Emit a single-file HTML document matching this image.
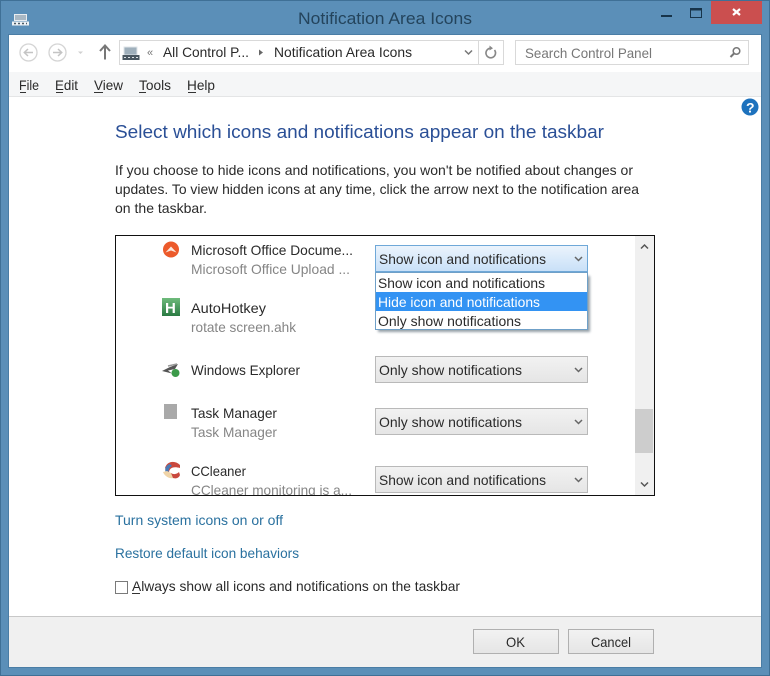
<!DOCTYPE html>
<html><head><meta charset="utf-8"><title>Notification Area Icons</title>
<style>
html,body{margin:0;padding:0;width:770px;height:676px;overflow:hidden;background:#5b8fb8}
svg{display:block}
text{font-family:"Liberation Sans",sans-serif;font-size:14px;fill:#2a2a2a;white-space:pre}
</style></head><body>
<svg width="770" height="676" viewBox="0 0 770 676" xmlns="http://www.w3.org/2000/svg">
<defs>
<linearGradient id="g" x1="0" y1="0" x2="0" y2="1"><stop offset="0" stop-color="#f2f2f2"/><stop offset="1" stop-color="#e5e5e5"/></linearGradient>
<linearGradient id="b" x1="0" y1="0" x2="0" y2="1"><stop offset="0" stop-color="#ecf4fc"/><stop offset="1" stop-color="#c8e0f8"/></linearGradient>
<linearGradient id="h" x1="0" y1="0" x2="0" y2="1"><stop offset="0" stop-color="#6fbb7c"/><stop offset="1" stop-color="#2a7a42"/></linearGradient>
<filter id="s" x="-10%" y="-20%" width="120%" height="140%"><feGaussianBlur stdDeviation="1.2"/></filter>
</defs>
<!-- frame -->
<rect width="770" height="676" fill="#5b8fb8"/>
<rect x="0.5" y="0.5" width="769" height="675" fill="none" stroke="#3f7096"/>
<rect x="9" y="35" width="752" height="632" fill="#fff"/>
<rect x="8.5" y="34.5" width="753" height="633" fill="none" stroke="#4a7da5"/>
<!-- title -->
<text x="298" y="24" style="font-size:17px;fill:#24445c" textLength="174" lengthAdjust="spacingAndGlyphs">Notification Area Icons</text>
<g>
<rect x="14" y="14" width="13" height="7" fill="#e8edf1"/><rect x="15" y="15" width="11" height="5" fill="#a9b8c4"/>
<rect x="12" y="21.5" width="17" height="4" fill="#eef2f5"/><path d="M14 23.500h2M18 23.500h2M22 23.500h2M26 23.500h1" stroke="#4a5a66" stroke-width="1.400"/>
</g>
<!-- caption buttons -->
<rect x="661" y="15" width="11" height="2" fill="#17344a"/>
<rect x="690.500" y="8.500" width="11" height="9" fill="#5b8fb8" stroke="#17344a"/><rect x="690" y="8" width="12" height="2.500" fill="#17344a"/>
<rect x="711" y="1" width="51" height="23" fill="#cb4f4f"/>
<path d="M733 9l7 6M740 9l-7 6" stroke="#fff" stroke-width="2.200"/>
<!-- nav -->
<circle cx="28.500" cy="52.500" r="8.500" fill="#fff" stroke="#d4d4d4" stroke-width="1.300"/>
<path d="M33 52.500h-8.500M28 49l-3.700 3.500 3.700 3.500" fill="none" stroke="#c4c4c4" stroke-width="1.500"/>
<circle cx="57.500" cy="52.500" r="8.500" fill="#fff" stroke="#d4d4d4" stroke-width="1.300"/>
<path d="M53 52.500h8.500M58 49l3.700 3.500-3.700 3.500" fill="none" stroke="#c4c4c4" stroke-width="1.500"/>
<path d="M78 51.500h5l-2.500 2.500z" fill="#d0d0d0"/>
<path d="M105 59.500v-13M100 51l5-5.500 5 5.500" fill="none" stroke="#777" stroke-width="2"/>
<!-- address -->
<rect x="119.500" y="40.500" width="384" height="24" fill="#fff" stroke="#d9d9d9"/>
<line x1="478.500" y1="41" x2="478.500" y2="64" stroke="#d9d9d9"/>
<rect x="124" y="47" width="13" height="8" fill="#9fb0bc" stroke="#dfe5e9"/>
<rect x="122.500" y="55" width="17" height="5" fill="#4a5862"/><path d="M124 57.500h2M128 57.500h2M132 57.500h2M136 57.500h2" stroke="#dfe5e9" stroke-width="1"/>
<text x="147" y="56" style="font-size:11px;fill:#777">«</text>
<text x="163" y="57" textLength="86" lengthAdjust="spacingAndGlyphs">All Control P...</text>
<path d="M259 49.500l4 3-4 3z" fill="#666"/>
<text x="274" y="57" textLength="138" lengthAdjust="spacingAndGlyphs">Notification Area Icons</text>
<path d="M465 50.500l3.500 3.500 3.500-3.500" fill="none" stroke="#777" stroke-width="1.500"/>
<path d="M494.500 50a4.800 4.800 0 1 1-3.500-1.800" fill="none" stroke="#888" stroke-width="1.600"/><path d="M489.500 45.500l3.500 2.700-3.500 2.300z" fill="#888"/>
<!-- search -->
<rect x="515.500" y="40.500" width="233" height="24" fill="#fff" stroke="#d9d9d9"/>
<text x="525" y="58" style="fill:#777" textLength="127" lengthAdjust="spacingAndGlyphs">Search Control Panel</text>
<circle cx="736.500" cy="51" r="3.300" fill="none" stroke="#777" stroke-width="1.500"/><path d="M734 53.500l-3.500 3.500" stroke="#777" stroke-width="2"/>
<!-- menu -->
<rect x="9" y="72" width="752" height="24" fill="#f5f6f7"/>
<line x1="9" y1="96.500" x2="761" y2="96.500" stroke="#e4e5e6"/>
<text x="19" y="90" textLength="20" lengthAdjust="spacingAndGlyphs">File</text><rect x="20" y="92" width="6" height="1" fill="#333"/>
<text x="55" y="90" textLength="23" lengthAdjust="spacingAndGlyphs">Edit</text><rect x="56" y="92" width="7" height="1" fill="#333"/>
<text x="94" y="90" textLength="29" lengthAdjust="spacingAndGlyphs">View</text><rect x="94" y="92" width="9" height="1" fill="#333"/>
<text x="139" y="90" textLength="32" lengthAdjust="spacingAndGlyphs">Tools</text><rect x="139" y="92" width="7" height="1" fill="#333"/>
<text x="187" y="90" textLength="28" lengthAdjust="spacingAndGlyphs">Help</text><rect x="188" y="92" width="8" height="1" fill="#333"/>
<!-- help -->
<circle cx="750" cy="107" r="8.500" fill="#1d72bd"/>
<text x="746" y="112.500" style="font-size:14px;font-weight:bold;fill:#fff">?</text>
<!-- heading -->
<text x="115" y="138" style="font-size:18px;fill:#2a4f96" textLength="489" lengthAdjust="spacingAndGlyphs">Select which icons and notifications appear on the taskbar</text>
<text x="115" y="175" textLength="518" lengthAdjust="spacingAndGlyphs">If you choose to hide icons and notifications, you won't be notified about changes or</text>
<text x="115" y="194" textLength="524" lengthAdjust="spacingAndGlyphs">updates. To view hidden icons at any time, click the arrow next to the notification area</text>
<text x="115" y="213" textLength="92" lengthAdjust="spacingAndGlyphs">on the taskbar.</text>
<!-- list -->
<rect x="115.500" y="235.500" width="539" height="260" fill="#fff" stroke="#111"/>
<rect x="635" y="236" width="19" height="259" fill="#f0f0f0"/>
<rect x="635" y="409" width="18" height="44" fill="#cdcdcd"/>
<path d="M641 248.500l3.500-3.500 3.500 3.500" fill="none" stroke="#555" stroke-width="1.500"/>
<path d="M641 482.500l3.500 3.500 3.500-3.500" fill="none" stroke="#555" stroke-width="1.500"/>
<!-- icons -->
<circle cx="171" cy="249.500" r="8" fill="#ec5a2b"/><path d="M165.500 252.500l5.500-6 5.500 6-5.500-2z" fill="#fde8dc"/>
<rect x="162" y="298" width="18" height="18" fill="url(#h)"/>
<text x="165" y="313" style="font-size:15px;font-weight:bold;fill:#fff">H</text>
<path d="M162 371l8-4 8-3-3 5-7 1.500 4 3z" fill="#555"/><path d="M168 366l9-2" stroke="#999" stroke-width="1.500"/>
<circle cx="175.500" cy="373" r="4" fill="#3c9a4a"/>
<rect x="164" y="404" width="13" height="15" fill="#a9a9a9"/>
<path d="M180 465c-5-5-13-4-15 3l4 5c0-5 4-7 11-5z" fill="#c9483d"/>
<path d="M170 464c-4 1-6 5-4 9h3c-1-3 0-5 3-7z" fill="#4a7ab5"/>
<path d="M163 472c2 5 7 7 11 6l-3-5-4-2z" fill="#f0d4a8"/>
<path d="M171 473c3 2 6 1 8-1l1 3c-1 3-4 4-7 3z" fill="#c9483d"/>
<!-- list labels -->
<text x="191" y="255" textLength="162" lengthAdjust="spacingAndGlyphs">Microsoft Office Docume...</text>
<text x="191" y="274" style="fill:#858585" textLength="159" lengthAdjust="spacingAndGlyphs">Microsoft Office Upload ...</text>
<text x="191" y="313" textLength="75" lengthAdjust="spacingAndGlyphs">AutoHotkey</text>
<text x="191" y="332" style="fill:#858585" textLength="105" lengthAdjust="spacingAndGlyphs">rotate screen.ahk</text>
<text x="191" y="375" textLength="109" lengthAdjust="spacingAndGlyphs">Windows Explorer</text>
<text x="191" y="418" textLength="86" lengthAdjust="spacingAndGlyphs">Task Manager</text>
<text x="191" y="437" style="fill:#858585" textLength="86" lengthAdjust="spacingAndGlyphs">Task Manager</text>
<text x="191" y="476" textLength="55" lengthAdjust="spacingAndGlyphs">CCleaner</text>
<svg x="116" y="236" width="519" height="259" viewBox="116 236 519 259" overflow="hidden"><text x="191" y="495" style="fill:#858585" textLength="161" lengthAdjust="spacingAndGlyphs">CCleaner monitoring is a...</text></svg>
<!-- dropdowns -->
<g stroke="#b9b9b9">
<rect x="375.500" y="356.500" width="212" height="26" fill="url(#g)"/>
<rect x="375.500" y="408.500" width="212" height="26" fill="url(#g)"/>
<rect x="375.500" y="466.500" width="212" height="26" fill="url(#g)"/>
</g>
<rect x="375.500" y="245.500" width="212" height="26" fill="url(#b)" stroke="#6fa8d8"/>
<text x="379" y="264" textLength="167" lengthAdjust="spacingAndGlyphs">Show icon and notifications</text>
<text x="379" y="375" textLength="143" lengthAdjust="spacingAndGlyphs">Only show notifications</text>
<text x="379" y="427" textLength="143" lengthAdjust="spacingAndGlyphs">Only show notifications</text>
<text x="379" y="485" textLength="167" lengthAdjust="spacingAndGlyphs">Show icon and notifications</text>
<g fill="none" stroke="#666" stroke-width="1.500">
<path d="M575 257l3.500 3.500 3.500-3.500"/><path d="M575 368l3.500 3.500 3.500-3.500"/><path d="M575 420l3.500 3.500 3.500-3.500"/><path d="M575 478l3.500 3.500 3.500-3.500"/>
</g>
<!-- popup -->
<rect x="378" y="276" width="212" height="56" fill="#50606e" opacity=".6" filter="url(#s)"/>
<rect x="375.500" y="272.500" width="212" height="57" fill="#fff" stroke="#6fa0c8"/>
<rect x="376" y="292" width="211" height="19" fill="#3393f3"/>
<text x="378" y="288" textLength="167" lengthAdjust="spacingAndGlyphs">Show icon and notifications</text>
<text x="378" y="307" style="fill:#fff" textLength="162" lengthAdjust="spacingAndGlyphs">Hide icon and notifications</text>
<text x="378" y="326" textLength="143" lengthAdjust="spacingAndGlyphs">Only show notifications</text>
<!-- links -->
<text x="115" y="525" style="fill:#2a719f" textLength="168" lengthAdjust="spacingAndGlyphs">Turn system icons on or off</text>
<text x="115" y="558" style="fill:#2a719f" textLength="184" lengthAdjust="spacingAndGlyphs">Restore default icon behaviors</text>
<rect x="115.500" y="581.500" width="12" height="12" fill="#fff" stroke="#7a7a7a"/>
<text x="132" y="591" textLength="328" lengthAdjust="spacingAndGlyphs">Always show all icons and notifications on the taskbar</text><rect x="132" y="593" width="8" height="1" fill="#333"/>
<!-- footer -->
<rect x="9" y="616" width="752" height="51" fill="#f0f0f0"/>
<line x1="9" y1="616.500" x2="761" y2="616.500" stroke="#c8c8c8"/>
<rect x="473.500" y="629.500" width="85" height="24" fill="url(#g)" stroke="#b0b0b0"/>
<rect x="568.500" y="629.500" width="85" height="24" fill="url(#g)" stroke="#b0b0b0"/>
<text x="506" y="647" textLength="19" lengthAdjust="spacingAndGlyphs">OK</text>
<text x="591" y="647" textLength="40" lengthAdjust="spacingAndGlyphs">Cancel</text>
</svg>
</body></html>
